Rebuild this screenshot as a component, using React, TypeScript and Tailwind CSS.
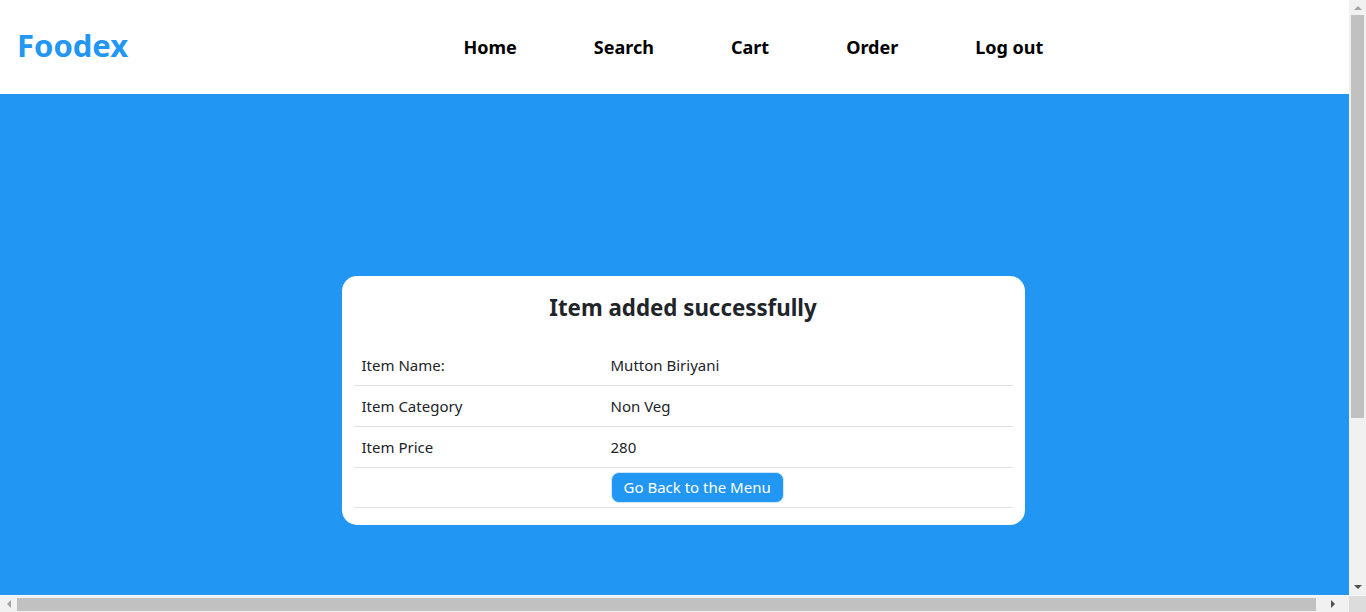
import React from 'react';

const rows = [
  { label: 'Item Name:', value: 'Mutton Biriyani' },
  { label: 'Item Category', value: 'Non Veg' },
  { label: 'Item Price', value: '280' },
];

const navLinks = ['Home', 'Search', 'Cart', 'Order', 'Log out'];

const Arrow = ({ dir, color }: { dir: 'up' | 'down' | 'left' | 'right'; color: string }) => {
  const points = {
    up: '0,4 4,0 8,4',
    down: '0,0 8,0 4,4',
    left: '4,0 4,8 0,4',
    right: '0,0 0,8 4,4',
  }[dir];
  const vertical = dir === 'up' || dir === 'down';
  return (
    <svg width={vertical ? 8 : 4} height={vertical ? 4 : 8} viewBox={vertical ? '0 0 8 4' : '0 0 4 8'}>
      <polygon points={points} fill={color} />
    </svg>
  );
};

export default function App() {
  return (
    <div className="h-[612px] w-[1366px] flex flex-col overflow-hidden font-['Noto_Sans',sans-serif] text-[#212529]">
      <div className="flex-1 flex min-h-0">
        <div className="flex-1 overflow-hidden">
          <div className="w-[1366px] min-h-[828px] flex flex-col bg-[#2196f3]">
            <header className="h-[94px] bg-white flex items-center">
              <div className="pl-[17px] w-[425px] text-[31px] font-bold text-[#2196f3] leading-none -mt-[4px]">
                Foodex
              </div>
              <nav className="flex items-center">
                {navLinks.map((link) => (
                  <a
                    key={link}
                    href="#"
                    className="px-[38.5px] text-[18px] font-bold text-black leading-none"
                  >
                    {link}
                  </a>
                ))}
              </nav>
            </header>

            <main className="flex-1 pt-[182px] flex justify-center">
              <div className="w-1/2 h-[249px] bg-white rounded-[15px] px-3 pt-4">
                <h2 className="text-center text-[22.3px] font-bold leading-8 mb-[21px]">
                  Item added successfully
                </h2>
                <table className="w-full text-[15px] border-collapse">
                  <tbody>
                    {rows.map((row) => (
                      <tr key={row.label} className="border-b border-[#dee2e6]">
                        <td className="w-[249px] px-2 py-2 leading-6">{row.label}</td>
                        <td className="px-2 py-2 leading-6">{row.value}</td>
                      </tr>
                    ))}
                    <tr className="border-b border-[#dee2e6]">
                      <td className="px-2 pt-1 pb-[4px]"></td>
                      <td className="px-2 pt-1 pb-[4px]">
                        <button className="h-[31px] px-3 rounded-lg bg-[#2196f3] text-white text-[15px] leading-none border border-[#cfe6fb]">
                          Go Back to the Menu
                        </button>
                      </td>
                    </tr>
                  </tbody>
                </table>
              </div>
            </main>
          </div>
        </div>

        {/* vertical scrollbar */}
        <div className="w-[17px] bg-[#f1f1f1] flex flex-col items-center">
          <div className="h-[15px] flex items-center justify-center">
            <Arrow dir="up" color="#a3a3a3" />
          </div>
          <div className="w-[13px] h-[403px] bg-[#c1c1c1]" />
          <div className="flex-1" />
          <div className="h-[17px] flex items-center justify-center">
            <Arrow dir="down" color="#505050" />
          </div>
        </div>
      </div>

      {/* horizontal scrollbar */}
      <div className="h-[17px] flex border-t border-[#f8f8f8]">
        <div className="flex-1 bg-[#f1f1f1] flex items-center">
          <div className="w-[17px] flex items-center justify-center">
            <Arrow dir="left" color="#a3a3a3" />
          </div>
          <div className="w-[1299px] h-[13px] bg-[#c1c1c1]" />
          <div className="flex-1 flex items-center justify-center">
            <Arrow dir="right" color="#505050" />
          </div>
        </div>
        <div className="w-[17px] bg-[#dcdcdc]" />
      </div>
    </div>
  );
}
